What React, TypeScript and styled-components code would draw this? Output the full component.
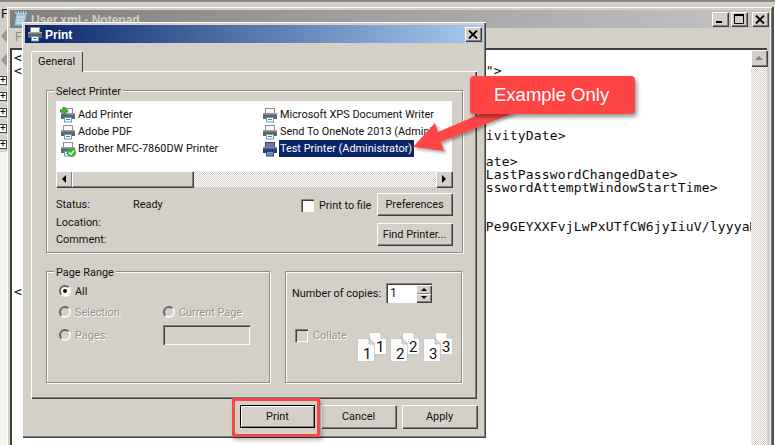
import React from "react";
import styled, { createGlobalStyle, css } from "styled-components";

const Global = createGlobalStyle`
  html, body { margin: 0; padding: 0; background: #d4d0c8; }
  * { box-sizing: border-box; }
`;

const FACE = "#d4d0c8";
const UI_FONT = `Roboto, "Liberation Sans", sans-serif`;
const raised = css`
  background: ${FACE};
  box-shadow: inset 1px 1px 0 #fff, inset -1px -1px 0 #808080, 1px 1px 0 #404040;
`;
const sunken = css`
  box-shadow: inset 1px 1px 0 #808080, inset 2px 2px 0 #404040, inset -1px -1px 0 #fff;
`;
const checker = css`
  background: conic-gradient(${FACE} 25%, #fff 0 50%, ${FACE} 0 75%, #fff 0) 0 0 / 2px 2px;
`;

const Desktop = styled.div`
  position: relative;
  width: 775px;
  height: 445px;
  overflow: hidden;
  background: ${FACE};
  border-top: 2px solid #8a8a88;
  font: 10.9px ${UI_FONT};
  color: #111;
  white-space: nowrap;
`;

const BackColumn = styled.div`
  width: 7px;
  height: 100%;
  display: flex;
  flex-direction: column;
  align-items: flex-start;
  overflow: hidden;
  background: linear-gradient(${FACE} 0 150px, #f4f3f0 150px);
  font-size: 13px;
`;
const BackMenu = styled.div`
  padding: 4px 0 0 1px;
  height: 26px;
`;
const BackTool = styled.div`
  width: 7px;
  height: 17px;
  margin-bottom: 7px;
`;
const TreeBox = styled.div`
  width: 8px;
  height: 9px;
  margin: 0 0 7px -1px;
  background: #fff;
  border: 1px solid #444;
  display: flex;
  align-items: center;
  justify-content: center;
  font: bold 9px/1 "Liberation Sans", sans-serif;
  color: #000;
`;

const Notepad = styled.div`
  position: absolute;
  left: 7px;
  top: 5px;
  width: 765px;
  height: 450px;
  padding: 3px 3px 0 3px;
  background: ${FACE};
  box-shadow: inset 1px 1px 0 #fff, inset -1px 0 0 #7a7a78, inset -2px 0 0 #f1f0ec, 2px 0 0 #505050, 3px 0 0 #fff;
  display: flex;
  flex-direction: column;
`;
const InactiveTitle = styled.div`
  height: 18px;
  flex: none;
  display: flex;
  align-items: center;
  padding: 0 1px 0 3px;
  gap: 3px;
  background: linear-gradient(90deg, #808080, #c4c4c4);
  color: ${FACE};
  font: bold 12px "Liberation Sans", sans-serif;
`;
const TitleText = styled.span`
  flex: 1;
  padding-top: 1px;
`;
const WinButton = styled.div<{ $gap?: number }>`
  ${raised};
  width: 16px;
  height: 14px;
  margin-left: ${(p) => p.$gap ?? 0}px;
  display: flex;
  align-items: center;
  justify-content: center;
`;
const MenuStrip = styled.div`
  height: 20px;
  flex: none;
  padding: 2px 0 0 5px;
  color: #8a8a86;
  font-size: 12px;
`;
const EditArea = styled.div`
  flex: 1;
  display: flex;
  min-height: 0;
  background: #fff;
  border-left: 2px solid #404040;
  border-top: 2px solid #404040;
  margin-right: 2px;
`;
const TextPane = styled.pre`
  flex: 1;
  min-width: 0;
  margin: 0;
  padding: 1px 0 0 2px;
  overflow: hidden;
  font: 13px/13px "DejaVu Sans Mono", monospace;
  letter-spacing: 0.17px;
  color: #0b0b0b;
`;
const VScroll = styled.div`
  width: 16px;
  flex: none;
  ${checker};
`;
const ScrollButton = styled.div`
  ${raised};
  width: 16px;
  height: 16px;
  display: flex;
  align-items: center;
  justify-content: center;
`;
const Tri = styled.div<{ $dir: "up" | "down" | "left" | "right"; $size?: number; $color?: string }>`
  width: 0;
  height: 0;
  ${(p) => {
    const s = p.$size ?? 4;
    const c = p.$color ?? "#000";
    if (p.$dir === "up") return `border-left:${s}px solid transparent;border-right:${s}px solid transparent;border-bottom:${s}px solid ${c};`;
    if (p.$dir === "down") return `border-left:${s}px solid transparent;border-right:${s}px solid transparent;border-top:${s}px solid ${c};`;
    if (p.$dir === "left") return `border-top:${s}px solid transparent;border-bottom:${s}px solid transparent;border-right:${s}px solid ${c};`;
    return `border-top:${s}px solid transparent;border-bottom:${s}px solid transparent;border-left:${s}px solid ${c};`;
  }}
`;

const Dialog = styled.div`
  position: absolute;
  left: 22px;
  top: 20px;
  width: 464px;
  height: 416px;
  padding: 3px;
  background: ${FACE};
  box-shadow: inset 1px 1px 0 #fff, inset -1px -1px 0 #404040, inset -2px -2px 0 #808080;
  display: flex;
  flex-direction: column;
`;
const DialogTitle = styled.div`
  height: 18px;
  flex: none;
  display: flex;
  align-items: center;
  gap: 2px;
  padding: 0 2px;
  background: linear-gradient(90deg, #0a246a, #a6caf0);
  color: #fff;
  font: bold 12px "Liberation Sans", sans-serif;
`;
const TabStrip = styled.div`
  display: flex;
  padding: 8px 0 0 6px;
  height: 28px;
  flex: none;
`;
const Tab = styled.div`
  position: relative;
  z-index: 1;
  width: 52px;
  height: 21px;
  padding: 4px 0 0 7px;
  background: ${FACE};
  border-radius: 2px 2px 0 0;
  box-shadow: inset 1px 1px 0 #fff, inset -1px 0 0 #404040;
`;
const Panel = styled.div`
  margin-left: 6px;
  width: 446px;
  height: 328px;
  flex: none;
  padding: 19px 0 0 15px;
  box-shadow: inset 1px 1px 0 #fff, inset -1px -1px 0 #404040, inset -2px -2px 0 #808080;
`;
const Group = styled.div<{ $w: number; $h: number }>`
  position: relative;
  width: ${(p) => p.$w}px;
  height: ${(p) => p.$h}px;
  border: 1px solid #8c8c88;
  box-shadow: 1px 1px 0 #fff, inset 1px 1px 0 #fff;
`;
const Legend = styled.span`
  position: absolute;
  left: 7px;
  top: -6px;
  padding: 0 2px;
  background: ${FACE};
`;
const SelectBody = styled.div`
  padding: 10px 0 0 9px;
`;
const ListBox = styled.div`
  width: 396px;
  height: 86px;
  background: #fff;
  display: flex;
  flex-direction: column;
`;
const ListGrid = styled.div`
  flex: 1;
  display: grid;
  grid-template-columns: 202px 172px;
  grid-auto-flow: column;
  grid-template-rows: repeat(3, 17px);
  padding: 5px 0 0 4px;
`;
const PrinterRow = styled.div`
  display: flex;
  align-items: center;
  gap: 1px;
  overflow: hidden;
`;
const PrinterName = styled.span<{ $selected?: boolean }>`
  padding: 0 2px 0 1px;
  height: 17px;
  line-height: 18px;
  ${(p) => p.$selected && `background:#0a246a;color:#fff;`}
`;
const HScroll = styled.div`
  height: 16px;
  flex: none;
  display: flex;
  ${checker};
`;
const ScrollThumb = styled.div`
  ${raised};
  width: 121px;
`;
const Spacer = styled.div`
  flex: 1;
`;
const StatusArea = styled.div`
  display: grid;
  grid-template-columns: 245px 76px 75px;
`;
const InfoGrid = styled.div`
  display: grid;
  grid-template-columns: 77px 1fr;
  grid-auto-rows: 17.5px;
  padding-top: 9px;
  align-items: center;
`;
const CheckLine = styled.label<{ $disabled?: boolean }>`
  display: flex;
  align-items: center;
  gap: 5px;
  padding-top: ${(p) => (p.$disabled ? 0 : 11)}px;
  align-self: start;
  ${(p) => p.$disabled && `color:#96938c;text-shadow:1px 1px 0 #fff;`}
`;
const CheckLabel = styled.span`
  padding-top: 1px;
`;
const CheckBox = styled.span<{ $disabled?: boolean }>`
  width: 13px;
  height: 13px;
  flex: none;
  background: ${(p) => (p.$disabled ? FACE : "#fff")};
  ${sunken};
`;
const SideButtons = styled.div`
  display: flex;
  flex-direction: column;
  gap: 8px;
  padding-top: 6px;
`;
const Button = styled.div<{ $h?: number; $default?: boolean }>`
  ${raised};
  width: 75px;
  height: ${(p) => p.$h ?? 22}px;
  padding-top: ${(p) => (p.$h ? 0 : 1)}px;
  display: flex;
  align-items: center;
  justify-content: center;
  ${(p) => p.$default && `outline:1px solid #000;outline-offset:-1px;box-shadow:inset 2px 2px 0 #fff, inset -2px -2px 0 #808080;`}
`;
const LowerRow = styled.div`
  display: flex;
  gap: 15px;
  margin-top: 18px;
`;
const RangeBody = styled.div`
  display: grid;
  grid-template-columns: 104px 1fr;
  grid-template-rows: 20px 22px 24px;
  padding: 9px 0 0 12px;
  align-items: center;
`;
const RadioLine = styled.div<{ $disabled?: boolean }>`
  display: flex;
  align-items: center;
  gap: 4px;
  ${(p) => p.$disabled && `color:#96938c;text-shadow:1px 1px 0 #fff;`}
`;
const Radio = styled.span<{ $on?: boolean; $disabled?: boolean }>`
  width: 12px;
  height: 12px;
  flex: none;
  border-radius: 50%;
  border: 2px solid;
  border-color: #666 #f8f8f8 #f8f8f8 #666;
  background: ${(p) => (p.$disabled ? FACE : "#fff")};
  display: flex;
  align-items: center;
  justify-content: center;
  &::after {
    content: "";
    width: 4px;
    height: 4px;
    border-radius: 50%;
    background: ${(p) => (p.$on ? "#000" : "transparent")};
  }
`;
const PagesBox = styled.div`
  width: 87px;
  height: 20px;
  ${sunken};
`;
const CopiesBody = styled.div`
  padding: 11px 0 0 6px;
`;
const CopiesRow = styled.div`
  display: flex;
  align-items: center;
  height: 20px;
`;
const CopiesLabel = styled.span`
  width: 94px;
  flex: none;
`;
const Spin = styled.div`
  width: 46px;
  height: 20px;
  background: #fff;
  ${sunken};
  display: flex;
  padding: 2px 1px 1px 2px;
  font-size: 12px;
  line-height: 16px;
`;
const SpinValue = styled.span`
  flex: 1;
  padding-left: 2px;
`;
const SpinButtons = styled.div`
  width: 15px;
  display: flex;
  flex-direction: column;
`;
const SpinButton = styled.div`
  ${raised};
  flex: 1;
  display: flex;
  align-items: center;
  justify-content: center;
`;
const CollateRow = styled.div`
  display: flex;
  align-items: flex-start;
  margin: 25px 0 0 3px;
`;
const CollateCol = styled.div`
  width: 61px;
  flex: none;
`;
const PageStack = styled.svg`
  margin-top: 4px;
  flex: none;
  display: block;
`;
const ButtonBar = styled.div`
  display: flex;
  justify-content: flex-end;
  gap: 6px;
  padding: 6px 6px 0 0;
`;

const Callout = styled.div`
  position: absolute;
  left: 470px;
  top: 74px;
  width: 165px;
  height: 38px;
  border-radius: 4px;
  background: #ff4444;
  color: #fff;
  font: 18.5px/37px "Liberation Sans", sans-serif;
  padding-left: 24px;
  box-shadow: 2px 3px 4px rgba(0, 0, 0, 0.4);
`;
const ArrowLayer = styled.svg`
  position: absolute;
  left: 0;
  top: -2px;
  pointer-events: none;
`;
const Highlight = styled.div`
  position: absolute;
  left: 232px;
  top: 396px;
  width: 88px;
  height: 39px;
  border: 3px solid #f44848;
  box-shadow: 2px 3px 4px rgba(0, 0, 0, 0.3);
  pointer-events: none;
`;

type Mark = "plus" | "check" | undefined;
const PrinterIcon = ({ mark, selected }: { mark?: Mark; selected?: boolean }) => {
  const body = selected ? "#2f3f70" : "#5e646c";
  const top = selected ? "#7c88ad" : "#9aa0a6";
  const paper = selected ? "#6b78a4" : "#fafafa";
  return (
    <svg width="16" height="16" viewBox="0 0 16 16" style={{ flex: "none" }}>
      <rect x="3.5" y="1.5" width="9" height="5" fill={paper} stroke={selected ? "#38477a" : "#8f8f8f"} />
      <path d="M1 7.5 Q1 6 2.5 6 H13.5 Q15 6 15 7.5 V12 H1 Z" fill={body} />
      <rect x="1" y="6" width="14" height="1.5" fill={top} />
      <rect x="4.5" y="10.5" width="7" height="4.5" fill={selected ? "#8494bd" : "#fff"} stroke={selected ? "#2f3f70" : "#6c9ab0"} />
      <rect x="6" y="12" width="4" height="1" fill="#2f8fb5" />
      {mark === "plus" && (
        <path d="M2.8 0.3 H5.2 V2.8 H7.7 V5.2 H5.2 V7.7 H2.8 V5.2 H0.3 V2.8 H2.8 Z" fill="#3fb53a" stroke="#1f7a1f" strokeWidth="0.6" />
      )}
      {mark === "check" && (
        <g>
          <circle cx="11.5" cy="11.5" r="4.5" fill="#35b035" />
          <path d="M9 11.5 L11 13.5 L14 9.5" fill="none" stroke="#fff" strokeWidth="1.5" />
        </g>
      )}
    </svg>
  );
};

const NotepadIcon = () => (
  <svg width="15" height="16" viewBox="0 0 15 16" style={{ flex: "none" }}>
    <path d="M3 2 H14 L12 15 H1 Z" fill="#9fc4df" stroke="#5f86a6" />
    <path d="M3 0.5 V3 M5.5 0.5 V3 M8 0.5 V3 M10.5 0.5 V3 M13 0.5 V3" stroke="#e6eef4" />
    <path d="M4 6 H11.5 M3.6 9 H11 M3.2 12 H10.6" stroke="#dbe9f2" />
  </svg>
);

const CloseGlyph = () => (
  <svg width="10" height="9" viewBox="0 0 10 9">
    <path d="M1 0.5 L9 8.5 M9 0.5 L1 8.5" stroke="#000" strokeWidth="1.8" />
  </svg>
);

const BackToolIcon = () => (
  <svg width="7" height="17" viewBox="0 0 7 17">
    <path d="M7 1 L1 8 L7 15 Z" fill="#9a9a96" />
  </svg>
);

const Stack = ({ n }: { n: string }) => (
  <g>
    <path d="M13.5 0.5 H25 L30.5 6 V22.5 H13.5 Z" fill="#fcfcfc" stroke="#bdbdb8" strokeWidth="0.7" />
    <path d="M25 0.5 V6 H30.5 Z" fill="#dcdcd8" stroke="#b0b0ac" strokeWidth="0.7" />
    <text x="20" y="20" fontSize="15" fontFamily="Roboto, sans-serif" fill="#111">{n}</text>
    <path d="M1.5 6.5 H13 L18.5 12 V29.5 H1.5 Z" fill="#fcfcfc" stroke="#bdbdb8" strokeWidth="0.7" />
    <path d="M13 6.5 V12 H18.5 Z" fill="#dcdcd8" stroke="#b0b0ac" strokeWidth="0.7" />
    <text x="7" y="27" fontSize="15" fontFamily="Roboto, sans-serif" fill="#111">{n}</text>
  </g>
);

const COL = " ".repeat(59);
const LINES: string[] = [
  "<",
  "<" + " ".repeat(58) + '">',
  "", "", "", "",
  COL + "ivityDate>",
  "",
  COL + "ate>",
  COL + "LastPasswordChangedDate>",
  COL + "sswordAttemptWindowStartTime>",
  "", "",
  COL + "Pe9GEYXXFvjLwPxUTfCW6jyIiuV/lyyyaM",
  "", "", "", "",
  "<",
];

const PRINTERS: { name: string; mark?: Mark; selected?: boolean }[] = [
  { name: "Add Printer", mark: "plus" },
  { name: "Adobe PDF" },
  { name: "Brother MFC-7860DW Printer", mark: "check" },
  { name: "Microsoft XPS Document Writer" },
  { name: "Send To OneNote 2013 (Administrator)" },
  { name: "Test Printer (Administrator)", selected: true },
];

export default function App() {
  return (
    <Desktop>
      <Global />
      <BackColumn>
        <BackMenu>F</BackMenu>
        <BackTool><BackToolIcon /></BackTool>
        <BackTool><BackToolIcon /></BackTool>
        {[0, 1, 2, 3, 4].map((i) => (
          <TreeBox key={i}>+</TreeBox>
        ))}
      </BackColumn>

      <Notepad>
        <InactiveTitle>
          <NotepadIcon />
          <TitleText>User.xml - Notepad</TitleText>
          <WinButton>
            <svg width="8" height="8" viewBox="0 0 8 8"><rect x="0" y="6" width="6" height="2" fill="#000" /></svg>
          </WinButton>
          <WinButton>
            <svg width="10" height="10" viewBox="0 0 10 10"><path d="M0.5 1 H9.5 V9.5 H0.5 Z" fill="none" stroke="#000" /><rect x="0" y="0" width="10" height="2" fill="#000" /></svg>
          </WinButton>
          <WinButton $gap={2}><CloseGlyph /></WinButton>
        </InactiveTitle>
        <MenuStrip>F</MenuStrip>
        <EditArea>
          <TextPane>{LINES.join("\n")}</TextPane>
          <VScroll>
            <ScrollButton><Tri $dir="up" $color="#808080" /></ScrollButton>
          </VScroll>
        </EditArea>
      </Notepad>

      <Dialog>
        <DialogTitle>
          <PrinterIcon />
          <TitleText>Print</TitleText>
          <WinButton><CloseGlyph /></WinButton>
        </DialogTitle>
        <TabStrip><Tab>General</Tab></TabStrip>
        <Panel>
          <Group $w={417} $h={163}>
            <Legend>Select Printer</Legend>
            <SelectBody>
              <ListBox>
                <ListGrid>
                  {PRINTERS.map((p) => (
                    <PrinterRow key={p.name}>
                      <PrinterIcon mark={p.mark} selected={p.selected} />
                      <PrinterName $selected={p.selected}>{p.name}</PrinterName>
                    </PrinterRow>
                  ))}
                </ListGrid>
                <HScroll>
                  <ScrollButton><Tri $dir="left" /></ScrollButton>
                  <ScrollThumb />
                  <Spacer />
                  <ScrollButton><Tri $dir="right" /></ScrollButton>
                </HScroll>
              </ListBox>
              <StatusArea>
                <InfoGrid>
                  <span>Status:</span><span>Ready</span>
                  <span>Location:</span><span />
                  <span>Comment:</span><span />
                </InfoGrid>
                <CheckLine><CheckBox /><CheckLabel>Print to file</CheckLabel></CheckLine>
                <SideButtons>
                  <Button>Preferences</Button>
                  <Button>Find Printer...</Button>
                </SideButtons>
              </StatusArea>
            </SelectBody>
          </Group>
          <LowerRow>
            <Group $w={224} $h={112}>
              <Legend>Page Range</Legend>
              <RangeBody>
                <RadioLine><Radio $on />All</RadioLine>
                <span />
                <RadioLine $disabled><Radio $disabled />Selection</RadioLine>
                <RadioLine $disabled><Radio $disabled />Current Page</RadioLine>
                <RadioLine $disabled><Radio $disabled />Pages:</RadioLine>
                <PagesBox />
              </RangeBody>
            </Group>
            <Group $w={177} $h={112}>
              <CopiesBody>
                <CopiesRow>
                  <CopiesLabel>Number of copies:</CopiesLabel>
                  <Spin>
                    <SpinValue>1</SpinValue>
                    <SpinButtons>
                      <SpinButton><Tri $dir="up" $size={3} /></SpinButton>
                      <SpinButton><Tri $dir="down" $size={3} /></SpinButton>
                    </SpinButtons>
                  </Spin>
                </CopiesRow>
                <CollateRow>
                  <CollateCol>
                    <CheckLine $disabled><CheckBox $disabled /><CheckLabel>Collate</CheckLabel></CheckLine>
                  </CollateCol>
                  <PageStack width="96" height="30" viewBox="0 0 96 30">
                    <Stack n="1" />
                    <g transform="translate(33 0)"><Stack n="2" /></g>
                    <g transform="translate(66 0)"><Stack n="3" /></g>
                  </PageStack>
                </CollateRow>
              </CopiesBody>
            </Group>
          </LowerRow>
        </Panel>
        <ButtonBar>
          <Button $h={23} $default>Print</Button>
          <Button $h={23}>Cancel</Button>
          <Button $h={23}>Apply</Button>
        </ButtonBar>
      </Dialog>

      <ArrowLayer width="775" height="445" viewBox="0 0 775 445">
        <defs>
          <filter id="arrowShadow" x="-20%" y="-20%" width="150%" height="150%">
            <feDropShadow dx="2" dy="2" stdDeviation="1.5" floodColor="#000" floodOpacity="0.35" />
          </filter>
        </defs>
        <polygon points="413,147 435,123 438,132 485,112 516,112 441,142 444,151" fill="#ff4444" filter="url(#arrowShadow)" />
      </ArrowLayer>
      <Callout>Example Only</Callout>
      <Highlight />
    </Desktop>
  );
}
